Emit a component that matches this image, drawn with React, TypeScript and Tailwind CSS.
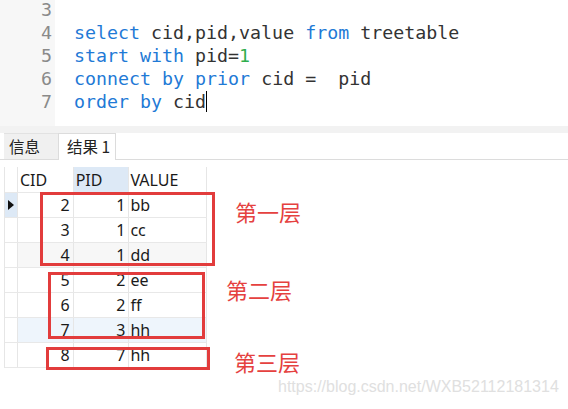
import React from 'react';

const mono = { fontFamily: '"DejaVu Sans Mono", "Liberation Mono", monospace' };
const ui = { fontFamily: '"Noto Sans", "Noto Sans CJK SC", sans-serif' };
const cjk = { fontFamily: '"Noto Sans CJK SC", "Noto Sans", sans-serif' };

type Tok = { t: string; c?: string };

const K = 'text-[#1f7ad6]';
const N = 'text-[#2fae4e]';

const lines: { no: number; toks: Tok[]; cursor?: boolean }[] = [
  { no: 3, toks: [] },
  {
    no: 4,
    toks: [
      { t: 'select', c: K },
      { t: ' cid,pid,value ' },
      { t: 'from', c: K },
      { t: ' treetable' },
    ],
  },
  {
    no: 5,
    toks: [
      { t: 'start', c: K },
      { t: ' ' },
      { t: 'with', c: K },
      { t: ' pid=' },
      { t: '1', c: N },
    ],
  },
  {
    no: 6,
    toks: [
      { t: 'connect', c: K },
      { t: ' ' },
      { t: 'by', c: K },
      { t: ' ' },
      { t: 'prior', c: K },
      { t: ' cid =  pid' },
    ],
  },
  {
    no: 7,
    toks: [
      { t: 'order', c: K },
      { t: ' ' },
      { t: 'by', c: K },
      { t: ' cid' },
    ],
    cursor: true,
  },
];

const rows = [
  { cid: 2, pid: 1, value: 'bb', bg: 'bg-white', current: true },
  { cid: 3, pid: 1, value: 'cc', bg: 'bg-white' },
  { cid: 4, pid: 1, value: 'dd', bg: 'bg-[#f7f7f7]' },
  { cid: 5, pid: 2, value: 'ee', bg: 'bg-white' },
  { cid: 6, pid: 2, value: 'ff', bg: 'bg-white' },
  { cid: 7, pid: 3, value: 'hh', bg: 'bg-[#eef5fc]' },
  { cid: 8, pid: 7, value: 'hh', bg: 'bg-white' },
];

export default function App() {
  return (
    <div className="w-[568px] h-[409px] overflow-hidden bg-white relative">
      {/* Editor */}
      <div className="flex h-[126px] overflow-hidden">
        <div className="w-[55px] bg-[#f7f7f7] flex flex-col items-end pr-[3px] mt-[-2px] text-[18.3px] leading-[23px] text-[#8a8a8a]" style={mono}>
          {lines.map((l) => (
            <div key={l.no} className="h-[23px]">{l.no}</div>
          ))}
        </div>
        <div className="flex-1 pl-[19px] mt-[-2px] text-[18.3px] leading-[23px] text-[#333]" style={mono}>
          {lines.map((l) => (
            <div key={l.no} className="h-[23px] whitespace-pre flex items-center">
              {l.toks.map((tk, i) => (
                <span key={i} className={tk.c}>{tk.t}</span>
              ))}
              {l.cursor && <span className="inline-block w-[1px] h-[21px] bg-black" />}
            </div>
          ))}
        </div>
      </div>

      {/* Splitter */}
      <div className="h-[7px] bg-[#f2f2f2]" />

      {/* Tabs */}
      <div className="h-[27px] flex items-end border-b border-[#dcdcdc] bg-white pl-[4px]" style={cjk}>
        <div className="h-[26px] w-[54px] flex items-center pl-[5px] bg-[#f0f0f0] border-t border-[#e2e2e2] text-[15.5px] text-[#222]">
          信息
        </div>
        <div className="h-[27px] w-[58px] flex items-center pl-[8px] bg-white border-t border-r border-l border-[#dcdcdc] mb-[-1px] text-[15.5px] text-[#222]">
          结果 1
        </div>
      </div>

      {/* Grid */}
      <div className="relative pt-[7px]" style={ui}>
        <div className="ml-[4px] w-[203px] border-l border-[#e6e6e6] text-[16px] text-[#1a1a1a]">
          <div className="flex h-[25px]">
            <div className="w-[13px] border-r border-[#e6e6e6]" />
            <div className="w-[56px] border-r border-[#e6e6e6] pl-[2px] flex items-center">CID</div>
            <div className="w-[56px] border-r border-[#e6e6e6] bg-[#dde9f6] pl-[2px] flex items-center">PID</div>
            <div className="w-[78px] border-r border-[#e6e6e6] pl-[1px] flex items-center">VALUE</div>
          </div>
          {rows.map((r) => (
            <div key={r.cid} className={`flex h-[25px] border-t border-[#e8e8e8] ${r.bg}`}>
              <div className={`w-[13px] border-r border-[#e6e6e6] flex items-center justify-center ${r.current ? 'bg-[#dde9f6]' : 'bg-white'}`}>
                {r.current && (
                  <svg width="6" height="10" viewBox="0 0 6 10">
                    <path d="M0 0 L6 5 L0 10 Z" fill="#111" />
                  </svg>
                )}
              </div>
              <div className="w-[56px] border-r border-[#e6e6e6] flex items-center justify-end pr-[3px]">{r.cid}</div>
              <div className="w-[56px] border-r border-[#e6e6e6] flex items-center justify-end pr-[3px]">{r.pid}</div>
              <div className="w-[78px] border-r border-[#e6e6e6] flex items-center pl-[1px]">{r.value}</div>
            </div>
          ))}
          <div className="h-[1px] bg-[#e8e8e8]" />
        </div>

        {/* Annotation boxes */}
        <div className="absolute left-[40px] top-[32px] w-[175px] h-[74px] border-[3px] border-[#e23c3c]" />
        <div className="absolute left-[48px] top-[112px] w-[157px] h-[67px] border-[3px] border-[#e23c3c]" />
        <div className="absolute left-[46px] top-[187px] w-[164px] h-[23px] border-[3px] border-[#e23c3c]" />

        <div className="absolute left-[235px] top-[38px] text-[22px] leading-[26px] text-[#e5413f]" style={cjk}>第一层</div>
        <div className="absolute left-[226px] top-[116px] text-[22px] leading-[26px] text-[#e5413f]" style={cjk}>第二层</div>
        <div className="absolute left-[234px] top-[188px] text-[22px] leading-[26px] text-[#e5413f]" style={cjk}>第三层</div>

        <div className="absolute left-[278px] top-[217px] text-[16px] leading-[20px] text-[#e0e0e0]" style={{ fontFamily: '"Liberation Sans", Arial, sans-serif' }}>
          https://blog.csdn.net/WXB52112181314
        </div>
      </div>
    </div>
  );
}
